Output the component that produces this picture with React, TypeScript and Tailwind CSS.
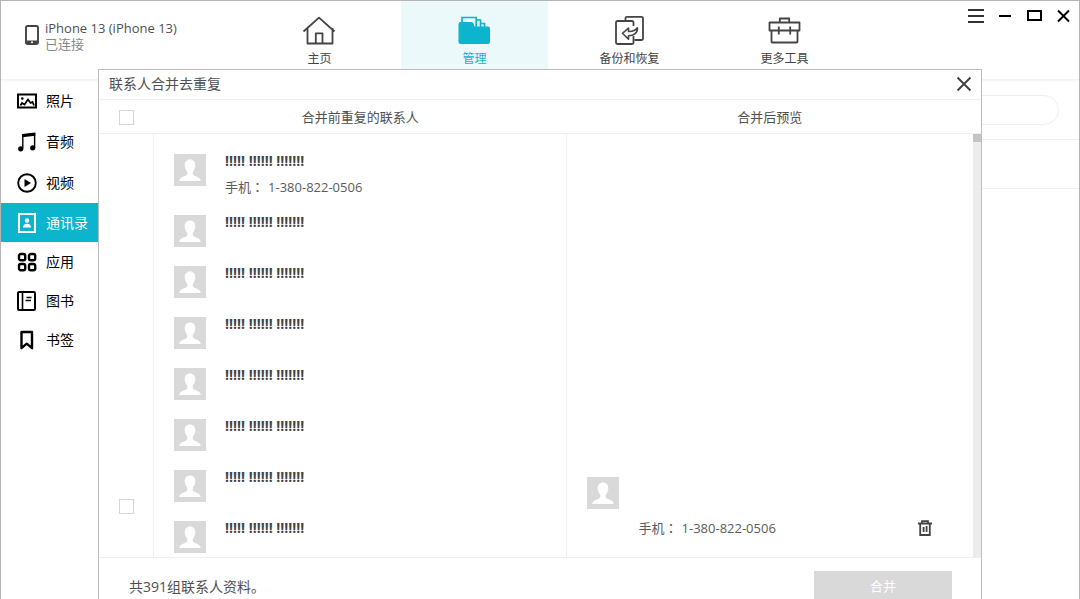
import type { ReactNode } from "react";

const tabs = [
	{ label: "主页", icon: <HomeIcon /> },
	{ label: "管理", icon: <FolderIcon />, active: true },
	{ label: "备份和恢复", icon: <BackupIcon /> },
	{ label: "更多工具", icon: <ToolboxIcon /> },
];

const mediaItems = [
	{ label: "照片", icon: <PhotoIcon /> },
	{ label: "音频", icon: <MusicIcon /> },
	{ label: "视频", icon: <VideoIcon /> },
];

const libraryItems = [
	{ label: "通讯录", icon: <ContactIcon />, active: true },
	{ label: "应用", icon: <AppsIcon /> },
	{ label: "图书", icon: <BookIcon /> },
	{ label: "书签", icon: <BookmarkIcon /> },
];

const contacts = [
	{ id: 1, name: "!!!!! !!!!!! !!!!!!!", phone: "1-380-822-0506" },
	{ id: 2, name: "!!!!! !!!!!! !!!!!!!" },
	{ id: 3, name: "!!!!! !!!!!! !!!!!!!" },
	{ id: 4, name: "!!!!! !!!!!! !!!!!!!" },
	{ id: 5, name: "!!!!! !!!!!! !!!!!!!" },
	{ id: 6, name: "!!!!! !!!!!! !!!!!!!" },
	{ id: 7, name: "!!!!! !!!!!! !!!!!!!" },
	{ id: 8, name: "!!!!! !!!!!! !!!!!!!" },
];

function TabSvg({ children }: { children: ReactNode }) {
	return (
		<svg
			width="37"
			height="32"
			viewBox="0 0 37 32"
			fill="none"
			stroke="currentColor"
			strokeWidth="1.8"
			strokeLinejoin="round"
		>
			{children}
		</svg>
	);
}

function HomeIcon() {
	return (
		<TabSvg>
			<path d="M2.5 16.5 18 2.6l15.500 13.900M6.500 13v15.500h25V13M14.800 28.500V18.300h6.700v10.200" />
		</TabSvg>
	);
}

function FolderIcon() {
	return (
		<TabSvg>
			<path
				d="M4.500 7h11a2 2 0 0 1 2 1.500l1 3H32a2 2 0 0 1 2 2V27a2 2 0 0 1-2 2H4.500a2 2 0 0 1-2-2V9a2 2 0 0 1 2-2z"
				fill="currentColor"
				stroke="none"
			/>
			<path d="M6 8V2.500h14.200V12M20.500 5h4v7M24.500 8.500h4V12" strokeWidth="1.700" strokeLinejoin="miter" />
		</TabSvg>
	);
}

function BackupIcon() {
	return (
		<TabSvg>
			<path d="M14.500 5V3.300a1.500 1.500 0 0 1 1.500-1.500h14.500A1.500 1.500 0 0 1 32 3.300v20.200a1.500 1.500 0 0 1-1.500 1.500h-7" />
			<path d="M22.500 11V7.500A1.500 1.500 0 0 0 21 6H6.500A1.500 1.500 0 0 0 5 7.500v20A1.500 1.500 0 0 0 6.500 29H21a1.500 1.500 0 0 0 1.500-1.500V21" />
			<path d="M11.500 18.300 17.500 13v3.500c4.500.2 7-1 9-3.700.2 5-3.500 8-9 8v3.400z" strokeWidth="1.600" />
		</TabSvg>
	);
}

function ToolboxIcon() {
	return (
		<TabSvg>
			<path d="M3.500 7.500h30v8h-30zM5.500 15.500v11a1 1 0 0 0 1 1h24a1 1 0 0 0 1-1v-11M13.800 7.500v-4h9.400v4M12.800 11.500v8M24.200 11.500v8" />
		</TabSvg>
	);
}

function SideSvg({ children }: { children: ReactNode }) {
	return (
		<svg width="20" height="20" viewBox="0 0 20 20" fill="none" stroke="currentColor" strokeWidth="2">
			{children}
		</svg>
	);
}

function PhotoIcon() {
	return (
		<SideSvg>
			<path d="M1 3.500h18v13H1z" />
			<path d="M3.500 14.500 5 12l2.500 1.500L11 8.500l2.500 3.500 2-1 1.500 3.500" strokeWidth="1.700" />
			<circle cx="5.300" cy="7.500" r="1.300" fill="currentColor" stroke="none" />
		</SideSvg>
	);
}

function MusicIcon() {
	return (
		<SideSvg>
			<path d="M5.800 16.500V3.200L17.600 1.800v14" strokeWidth="1.400" />
			<path d="M5.200 1.900 18.300.5v3.300L5.200 5.200z" fill="currentColor" stroke="none" />
			<circle cx="3.700" cy="16.800" r="2.600" fill="currentColor" stroke="none" />
			<circle cx="15.700" cy="15.800" r="2.600" fill="currentColor" stroke="none" />
		</SideSvg>
	);
}

function VideoIcon() {
	return (
		<SideSvg>
			<circle cx="10" cy="10" r="8.800" strokeWidth="1.900" />
			<path d="M7.500 6v8l6.500-4z" fill="currentColor" stroke="none" />
		</SideSvg>
	);
}

function ContactIcon() {
	return (
		<SideSvg>
			<path d="M2 1h16v18H2z" />
			<circle cx="10" cy="7.500" r="2.200" fill="currentColor" stroke="none" />
			<path d="M6 14.500c0-2.500 1.500-3.800 4-3.800s4 1.300 4 3.800z" fill="currentColor" stroke="none" />
		</SideSvg>
	);
}

function AppsIcon() {
	return (
		<SideSvg>
			<g strokeWidth="2.400">
				<rect x="2" y="2" width="6.200" height="6.200" rx="1.800" />
				<rect x="12" y="2" width="6.200" height="6.200" rx="1.800" />
				<rect x="2" y="12" width="6.200" height="6.200" rx="1.800" />
				<rect x="12" y="12" width="6.200" height="6.200" rx="1.800" />
			</g>
		</SideSvg>
	);
}

function BookIcon() {
	return (
		<SideSvg>
			<rect x="1" y="1" width="17" height="18" rx="1" />
			<path d="M5.500 1v18" strokeWidth="1.600" />
			<path d="M9.500 6.500h5M8.500 9.500h5.500" strokeWidth="1.600" />
		</SideSvg>
	);
}

function BookmarkIcon() {
	return (
		<SideSvg>
			<path d="M4.500 2h10.500v16.200l-5.250-4.500-5.250 4.500z" strokeWidth="2.400" strokeLinejoin="round" />
		</SideSvg>
	);
}

function Avatar() {
	return (
		<svg className="shrink-0" width="32" height="32" viewBox="0 0 32 32">
			<path d="M0 0h32v32H0z" fill="#d9d9d9" />
			<path
				d="M16 5.500c3.400 0 5.300 2.300 5.300 5.600 0 2.600-1 5-2.500 6.600v2.800c1 1.800 7.500 2 8 6.500H5.200c.5-4.500 7-4.700 8-6.500v-2.800c-1.500-1.600-2.500-4-2.500-6.600 0-3.300 1.900-5.600 5.300-5.600z"
				fill="#fff"
			/>
		</svg>
	);
}

function Checkbox({ label }: { label: string }) {
	return (
		<input
			type="checkbox"
			aria-label={label}
			className="size-[15px] shrink-0 appearance-none border border-[#d6d6d6] bg-white"
		/>
	);
}

function Phone({ number }: { number: string }) {
	return (
		<p className="flex gap-1 text-[13px] leading-[18px] text-[#5c5c5c]">
			<span>
				手机<span className="font-['Noto_Sans_CJK_TC',sans-serif]">：</span>
			</span>
			<span>{number}</span>
		</p>
	);
}

type Item = { label: string; icon: ReactNode; active?: boolean };

function SideItem({ item, height }: { item: Item; height: string }) {
	return (
		<li>
			<a
				href="#"
				className={`flex items-center gap-[9px] pl-4 text-sm ${height} ${
					item.active ? "bg-[#0cb4cd] text-white" : "text-black"
				}`}
			>
				{item.icon}
				{item.label}
			</a>
		</li>
	);
}

const Header = () => {
	return (
		<header className="flex h-[79px] justify-between border-b border-[#f3f3f3] shadow-xs">
			<div className="flex">
				<div className="flex w-[245px] items-start gap-[6px] pt-[19px] pl-6">
					<svg className="mt-[5px] shrink-0" width="14" height="20" viewBox="0 0 14 20">
						<rect x="1" y="1" width="12" height="18" rx="1.500" fill="none" stroke="#444" strokeWidth="1.900" />
						<path d="M1 15.500h12V19H1z" fill="#444" />
						<circle cx="7" cy="17.300" r="1" fill="#fff" />
					</svg>
					<div className="text-[13px] leading-4 whitespace-nowrap">
						<p className="text-[#505050]">iPhone 13 (iPhone 13)</p>
						<p className="text-[#888]">已连接</p>
					</div>
				</div>
				<nav className="flex gap-2">
					{tabs.map((tab) => (
						<a
							key={tab.label}
							href="#"
							className={`flex w-[147px] flex-col items-center gap-1 pt-[14px] text-xs leading-4 ${
								tab.active ? "bg-[#ebf9fb] text-[#0cb4cd]" : "text-[#444]"
							}`}
						>
							{tab.icon}
							{tab.label}
						</a>
					))}
				</nav>
			</div>
			<div className="flex items-start gap-[15px] pt-[7px] pr-[9px] text-black">
				<button aria-label="菜单">
					<svg width="16" height="16" viewBox="0 0 16 16" stroke="#333" strokeWidth="1.800">
						<path d="M0 2h16M0 8h16M0 14h16" />
					</svg>
				</button>
				<button aria-label="最小化">
					<svg width="12" height="16" viewBox="0 0 12 16" stroke="currentColor" strokeWidth="2">
						<path d="M0 8h12" />
					</svg>
				</button>
				<button aria-label="最大化">
					<svg width="16" height="16" viewBox="0 0 16 16" fill="none" stroke="currentColor" strokeWidth="2">
						<path d="M2 3h13v9H2z" />
					</svg>
				</button>
				<button aria-label="关闭">
					<svg width="13" height="16" viewBox="0 0 13 16" stroke="currentColor" strokeWidth="1.900">
						<path d="m1 2.500 11 11M12 2.500l-11 11" />
					</svg>
				</button>
			</div>
		</header>
	);
};

const MergeDialog = () => {
	return (
		<section
			role="dialog"
			aria-labelledby="merge-title"
			className="absolute top-[68px] right-[97px] bottom-0 left-[97px] flex flex-col border border-b-0 border-[#bdbdbd] bg-white"
		>
			<div className="flex h-[30px] shrink-0 items-center justify-between border-b border-[#efefef] pr-[9px] pb-[2px] pl-[10px]">
				<h2 id="merge-title" className="text-sm text-[#505050]">
					联系人合并去重复
				</h2>
				<button aria-label="关闭">
					<svg width="16" height="16" viewBox="0 0 16 16" stroke="#444" strokeWidth="2">
						<path d="m1.500 1.500 13 13M14.500 1.500l-13 13" />
					</svg>
				</button>
			</div>
			<div className="flex h-[34px] shrink-0 items-center border-b border-[#f0f0f0] pt-[2px] pr-2 text-[13px] text-[#505050]">
				<div className="flex w-[55px] shrink-0 justify-center">
					<Checkbox label="全选" />
				</div>
				<div className="grid flex-1 grid-cols-[412fr_406fr] text-center">
					<p>合并前重复的联系人</p>
					<p>合并后预览</p>
				</div>
			</div>
			<div className="flex min-h-0 flex-1 border-b border-[#efefef]">
				<div className="flex w-[55px] shrink-0 flex-col items-center justify-end border-r border-[#f0f0f0] pb-[43px]">
					<Checkbox label="选择此组" />
				</div>
				<div className="grid min-h-0 flex-1 grid-cols-[412fr_406fr] grid-rows-1">
					<ul className="min-h-0 overflow-hidden border-r border-[#f0f0f0] pt-5 pl-5">
						{contacts.map((contact) => (
							<li key={contact.id} className="flex items-start gap-[19px] pb-[19px]">
								<Avatar />
								<div>
									<p className="text-sm leading-[14px] font-bold text-[#444]">{contact.name}</p>
									{contact.phone && (
										<div className="mt-[10px]">
											<Phone number={contact.phone} />
										</div>
									)}
								</div>
							</li>
						))}
					</ul>
					<div className="flex flex-col justify-end gap-[10px] pr-10 pb-5 pl-5">
						<Avatar />
						<div className="flex items-center justify-between pl-[52px]">
							<Phone number="1-380-822-0506" />
							<button aria-label="删除">
								<svg width="16" height="16" viewBox="0 0 16 16" fill="none" stroke="#444" strokeWidth="1.800">
									<path d="M1 3.500h14M5 3V1.200h6V3M3.200 3.500V15h9.600V3.500M6.600 7v5M9.600 6v6" />
								</svg>
							</button>
						</div>
					</div>
				</div>
				<div className="w-2 shrink-0 bg-[#ededed]">
					<div className="h-2 bg-[#c4c4c4]" />
				</div>
			</div>
			<footer className="flex h-[41px] shrink-0 items-start justify-between overflow-hidden pt-[13px] pr-[29px] pl-[30px]">
				<p className="pt-1 text-sm leading-6 text-[#505050]">共391组联系人资料。</p>
				<button disabled className="h-8 w-[138px] shrink-0 bg-[#d9d9d9] text-[13px] text-white">
					合并
				</button>
			</footer>
		</section>
	);
};

export default function App() {
	return (
		<div className="relative flex h-screen flex-col overflow-hidden border border-b-0 border-[#b5b5b5] bg-white font-['Open_Sans','Noto_Sans_CJK_SC',sans-serif]">
			<Header />
			<div className="flex min-h-0 flex-1">
				<aside className="w-[97px] shrink-0">
					<ul>
						{mediaItems.map((item) => (
							<SideItem key={item.label} item={item} height="h-[41px]" />
						))}
						{libraryItems.map((item) => (
							<SideItem key={item.label} item={item} height="h-[39px]" />
						))}
					</ul>
				</aside>
				<main className="flex-1">
					<div className="flex h-[60px] items-center justify-end border-b border-[#f0f0f0] pr-5">
						<input
							type="search"
							aria-label="搜索"
							className="h-[30px] w-60 rounded-full border border-[#efefef] px-4 text-sm outline-none"
						/>
					</div>
					<div className="h-[49px] border-b border-[#f0f0f0]" />
				</main>
			</div>
			<MergeDialog />
		</div>
	);
}
